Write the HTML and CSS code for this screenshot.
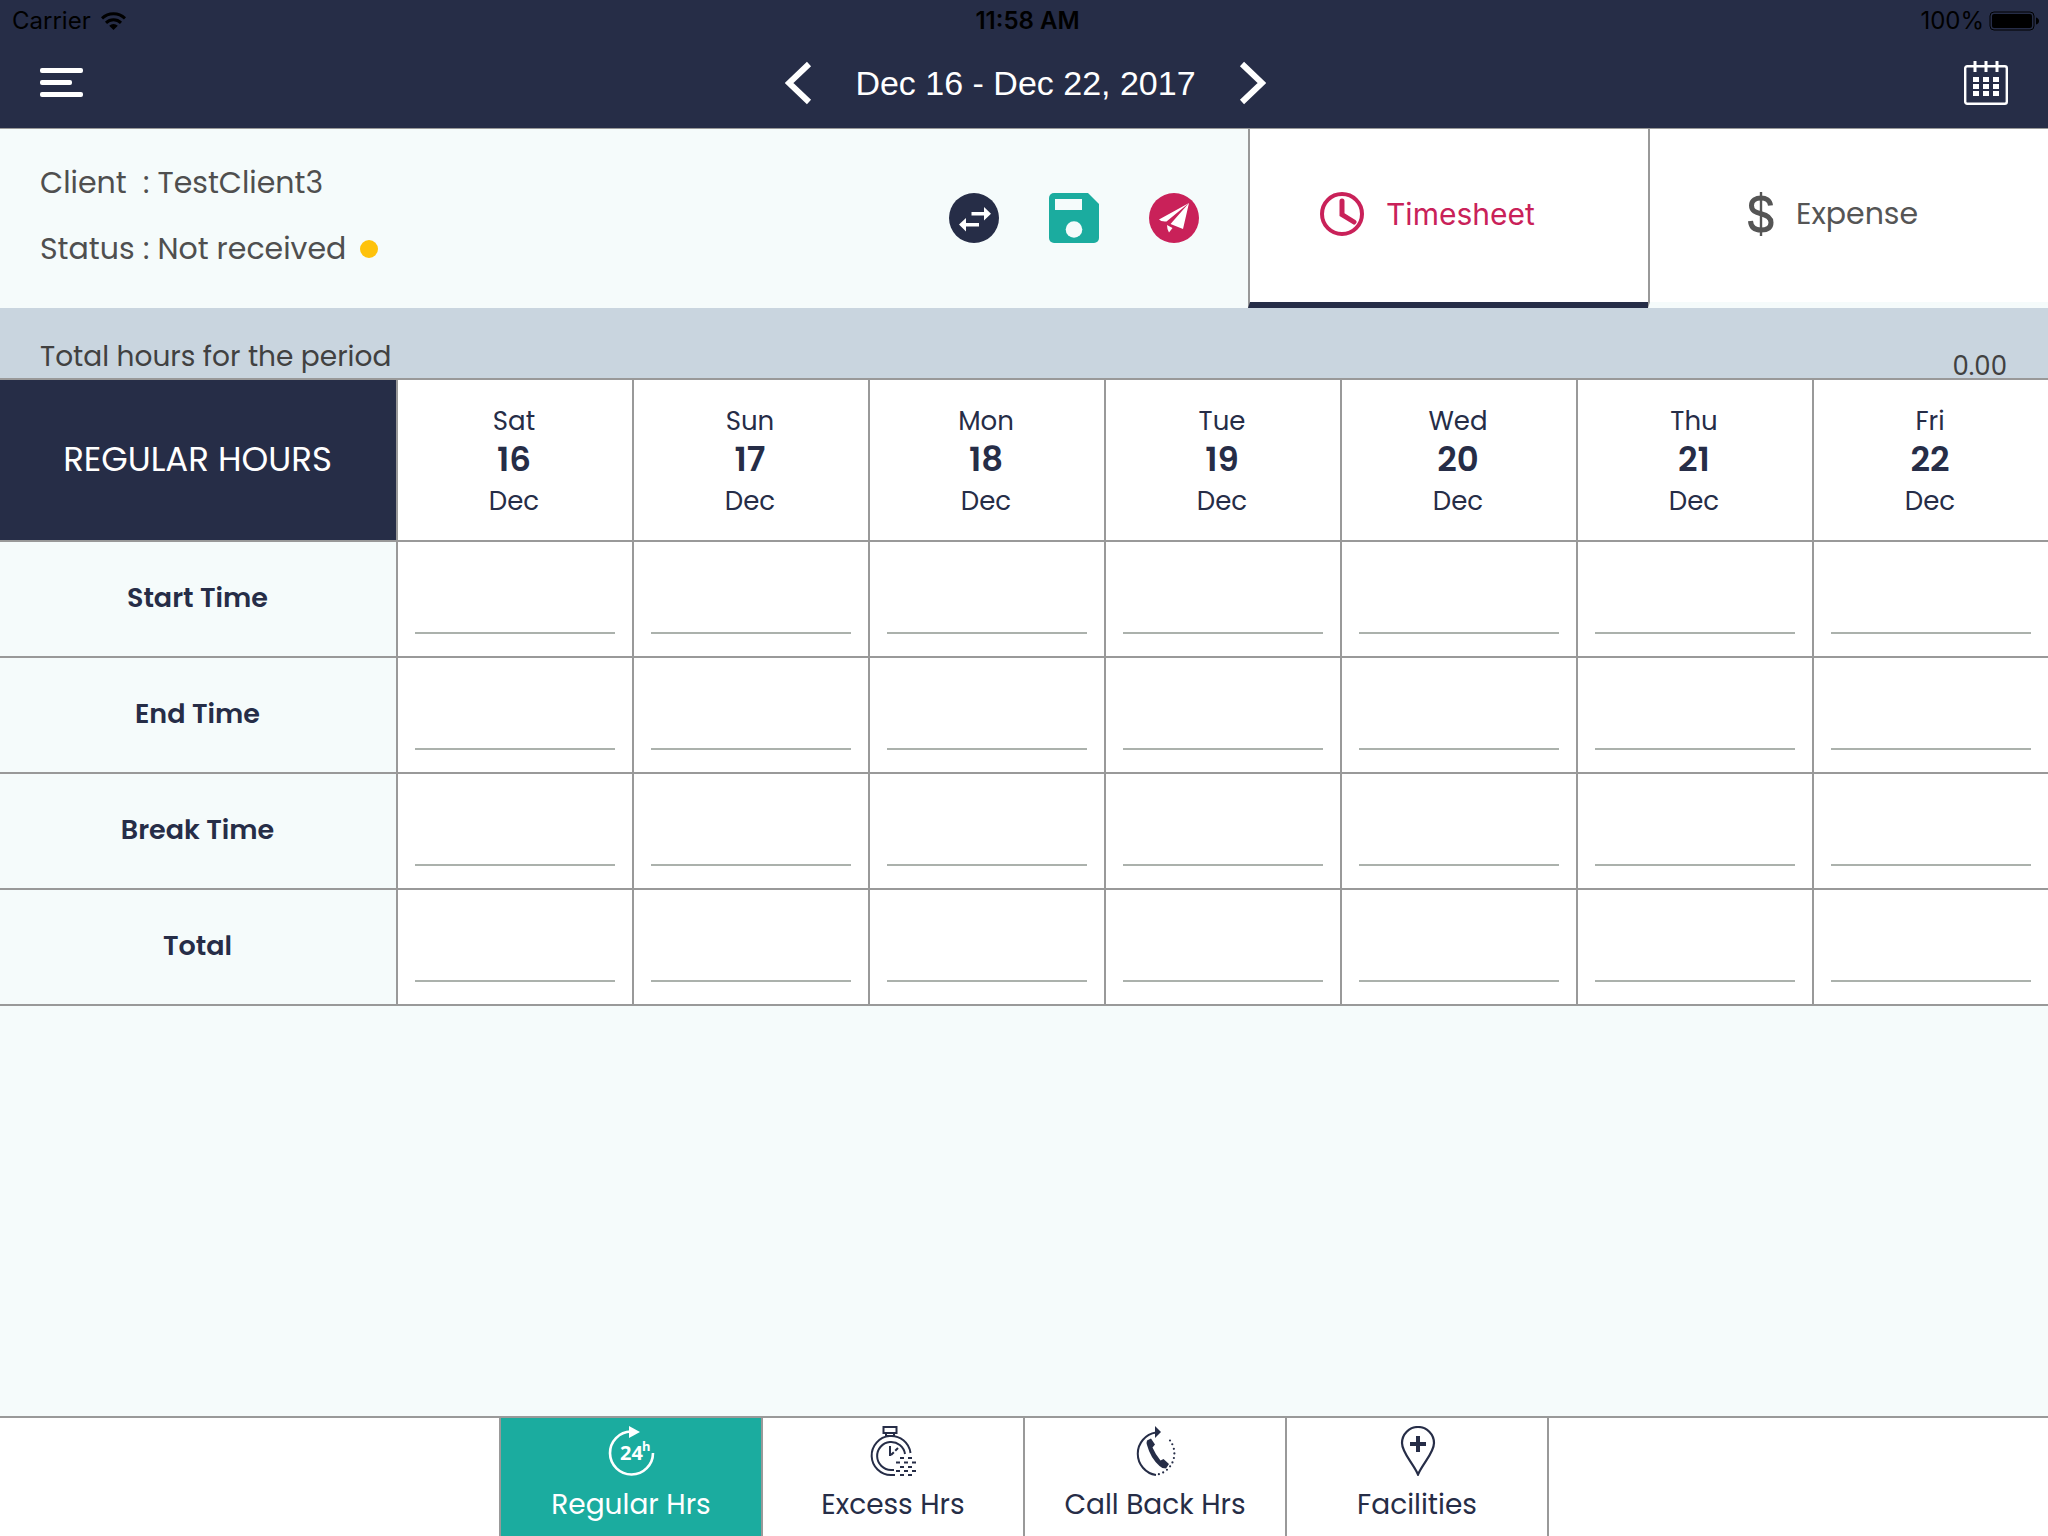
FILE: index.html
```html
<!DOCTYPE html>
<html lang="en">
<head>
<meta charset="utf-8">
<title>Timesheet</title>
<meta name="viewport" content="width=device-width, initial-scale=1">
<link rel="stylesheet" href="styles.css">
</head>
<body>
<header class="top">
  <div class="statusbar">
    <span class="carrier">Carrier
      <svg class="wifi" width="25" height="18" viewBox="0 0 25 18" aria-hidden="true"><g fill="none" stroke="currentColor" stroke-width="3"><path d="M1 6.300a16.500 16.500 0 0 1 23 0"/><path d="M5 10.800a10.800 10.800 0 0 1 15 0"/></g><path d="M12.500 18l-4.300-4.300a6.200 6.200 0 0 1 8.600 0z" fill="currentColor"/></svg>
    </span>
    <span class="clock">11:58 AM</span>
    <span class="battery">100%
      <svg width="50" height="20" viewBox="0 0 50 20" aria-hidden="true"><rect x="1" y="1" width="44" height="18" rx="4" fill="none" stroke="currentColor" stroke-width="1"/><rect x="3" y="3" width="40" height="14" rx="2" fill="currentColor"/><path d="M47 6.500q3 1 3 3.500t-3 3.500z" fill="currentColor"/></svg>
    </span>
  </div>
  <nav class="toolbar">
    <button class="icon-btn" aria-label="Menu"><svg width="43" height="30" viewBox="0 0 43 30"><g fill="#fff"><rect y="0" width="43" height="5" rx="2"/><rect y="12" width="32" height="5" rx="2"/><rect y="24" width="43" height="5" rx="2"/></g></svg></button>
    <div class="period">
      <button class="icon-btn" aria-label="Previous week"><svg width="27" height="44" viewBox="0 0 27 44"><path d="M24 3L4 22l20 19" fill="none" stroke="#fff" stroke-width="6"/></svg></button>
      <span class="period-text">Dec 16 - Dec 22, 2017</span>
      <button class="icon-btn" aria-label="Next week"><svg width="27" height="44" viewBox="0 0 27 44"><path d="M3 3l20 19L3 41" fill="none" stroke="#fff" stroke-width="6"/></svg></button>
    </div>
    <button class="icon-btn" aria-label="Calendar"><svg width="44" height="44" viewBox="0 0 44 44"><rect x="1.200" y="5.200" width="41.600" height="37.600" rx="2" fill="none" stroke="#fff" stroke-width="2.400"/><path d="M11 0v11M22 0v11M33 0v11" stroke="#fff" stroke-width="3"/><g stroke="#fff" stroke-width="5" stroke-dasharray="6 4"><path d="M9 18.500h26M9 25.500h26M9 32.500h26"/></g></svg></button>
  </nav>
</header>

<section class="summary">
  <dl class="info">
    <div><dt>Client</dt><dd>: TestClient3</dd></div>
    <div><dt>Status</dt><dd>: Not received <i class="dot"></i></dd></div>
  </dl>
  <div class="actions">
    <button class="icon-btn" aria-label="Switch"><svg width="50" height="50" viewBox="0 0 50 50"><circle cx="25" cy="25" r="25" fill="#262d47"/><path d="M22.500 19h12.500v-5l7 6.700-7 6.800v-5H22.500zM30 30H17v-5l-7 6.500 7 7V33.500h13z" fill="#fff"/></svg></button>
    <button class="icon-btn" aria-label="Save"><svg width="50" height="50" viewBox="0 0 50 50"><path d="M5 0h34l11 11v34a5 5 0 0 1-5 5H5a5 5 0 0 1-5-5V5a5 5 0 0 1 5-5z" fill="#1bac9f"/><path d="M6 6h27v11H6z" fill="#f5fbfb"/><circle cx="25" cy="36.500" r="8.300" fill="#f5fbfb"/></svg></button>
    <button class="icon-btn" aria-label="Submit"><svg width="50" height="50" viewBox="0 0 50 50"><circle cx="25" cy="25" r="25" fill="#c92159"/><path d="M40 10L10 26.500q2 2.500 7.500 2zM40 10L21.500 31l12.500 5zM18 32l5.500 3L20 39.500q-2-3-2-7.500z" fill="#fff"/></svg></button>
  </div>
  <nav class="tabs">
    <a class="tab tab-on" href="#timesheet"><svg width="44" height="44" viewBox="0 0 44 44" fill="none" stroke="currentColor"><circle cx="22" cy="22" r="20" stroke-width="4"/><path d="M22 9v13.500l12 7.500" stroke-width="5" stroke-linecap="round"/></svg>Timesheet</a>
    <a class="tab tab-off" href="#expense"><svg width="26" height="44" viewBox="0 0 26 44" fill="none" stroke="currentColor"><path d="M22.500 13.500C22 8.500 18 6 13 6S3.500 8.500 3.500 13.500C3.500 19 8 20.500 13 21.700S23 25 23 30.500 18.500 38 13 38 3 35.500 2.500 29" stroke-width="5"/><path d="M13 0v44" stroke-width="2.400"/></svg>Expense</a>
  </nav>
</section>

<main class="content">
  <div class="total"><span class="total-label">Total hours for the period</span><output class="total-value">0.00</output></div>
  <table class="sheet">
    <thead><tr>
      <th class="corner" scope="col">REGULAR HOURS</th>
      <th class="day" scope="col">Sat<b>16</b>Dec</th>
      <th class="day" scope="col">Sun<b>17</b>Dec</th>
      <th class="day" scope="col">Mon<b>18</b>Dec</th>
      <th class="day" scope="col">Tue<b>19</b>Dec</th>
      <th class="day" scope="col">Wed<b>20</b>Dec</th>
      <th class="day" scope="col">Thu<b>21</b>Dec</th>
      <th class="day" scope="col">Fri<b>22</b>Dec</th>
    </tr></thead>
    <tbody>
      <tr><th scope="row">Start Time</th><td><input aria-label="Start Time, Sat 16"></td><td><input aria-label="Start Time, Sun 17"></td><td><input aria-label="Start Time, Mon 18"></td><td><input aria-label="Start Time, Tue 19"></td><td><input aria-label="Start Time, Wed 20"></td><td><input aria-label="Start Time, Thu 21"></td><td><input aria-label="Start Time, Fri 22"></td></tr>
      <tr><th scope="row">End Time</th><td><input aria-label="End Time, Sat 16"></td><td><input aria-label="End Time, Sun 17"></td><td><input aria-label="End Time, Mon 18"></td><td><input aria-label="End Time, Tue 19"></td><td><input aria-label="End Time, Wed 20"></td><td><input aria-label="End Time, Thu 21"></td><td><input aria-label="End Time, Fri 22"></td></tr>
      <tr><th scope="row">Break Time</th><td><input aria-label="Break Time, Sat 16"></td><td><input aria-label="Break Time, Sun 17"></td><td><input aria-label="Break Time, Mon 18"></td><td><input aria-label="Break Time, Tue 19"></td><td><input aria-label="Break Time, Wed 20"></td><td><input aria-label="Break Time, Thu 21"></td><td><input aria-label="Break Time, Fri 22"></td></tr>
      <tr><th scope="row">Total</th><td><input aria-label="Total, Sat 16"></td><td><input aria-label="Total, Sun 17"></td><td><input aria-label="Total, Mon 18"></td><td><input aria-label="Total, Tue 19"></td><td><input aria-label="Total, Wed 20"></td><td><input aria-label="Total, Thu 21"></td><td><input aria-label="Total, Fri 22"></td></tr>
    </tbody>
  </table>
</main>

<nav class="bottom">
  <a class="kind kind-on" href="#regular">
    <svg width="50" height="50" viewBox="0 0 50 50"><path d="M25 5.500A21.500 21.500 0 1 0 47 27" fill="none" stroke="currentColor" stroke-width="2.600"/><path d="M23 0l11 6-11 6z" fill="currentColor"/><text x="14" y="34" class="glyph">24</text><text x="36" y="25" class="glyph-sup">h</text></svg>
    Regular Hrs</a>
  <a class="kind" href="#excess">
    <svg width="50" height="50" viewBox="-2 0 50 50" fill="none" stroke="currentColor" stroke-width="2"><path d="M13.500 1h13v6h-13zM16 7v4M24 7v4M16 10h8"/><path d="M25 49H21a19.500 19.500 0 1 1 19.500-22"/><path d="M24 44h-3a14 14 0 1 1 14-16"/><path d="M20 20v10"/><path d="M21 29l7-7" stroke-dasharray="4 2"/><g stroke-dasharray="4 4"><path d="M30 32h12M26 36.500h20M30 41h12M26 45h20M30 49h12"/></g></svg>
    Excess Hrs</a>
  <a class="kind" href="#callback">
    <svg width="50" height="50" viewBox="-1 0 50 50"><path d="M25 6.500a21.500 21.500 0 0 0 0 42.500" fill="none" stroke="currentColor" stroke-width="2"/><path d="M24 0l6 6-6 6z" fill="currentColor"/><path d="M39 14.500a21.500 21.500 0 0 1-12.500 34" fill="none" stroke="currentColor" stroke-width="2.200" stroke-linecap="round" stroke-dasharray="0 4.600"/><path d="M16 14.500l4-2 4 6-2.500 3q3 7 8 13l3-1.500 5.500 5-3 4.500q-4 0-6.500-2.500-9-8-12.500-21-.8-2.500 0-4.500z" fill="currentColor"/></svg>
    Call Back Hrs</a>
  <a class="kind" href="#facilities">
    <svg width="50" height="50" viewBox="-1 0 50 50" fill="none" stroke="currentColor"><path d="M25 48.500C20 37 9 27 9 17a16 16 0 0 1 32 0c0 10-11 20-16 31.500z" stroke-width="2.200"/><path d="M25 10v16M17 18h16" stroke-width="4"/></svg>
    Facilities</a>
</nav>
</body>
</html>
```
FILE: styles.css
```css
* { box-sizing: border-box; }

body {
  margin: 0;
  min-height: 100vh;
  display: flex;
  flex-direction: column;
  background: #f5fbfb;
  color: #262d47;
  font-family: Poppins, Inter, "Noto Sans", sans-serif;
}

svg { flex: none; display: block; }
a { color: inherit; text-decoration: none; }
.icon-btn { padding: 0; border: 0; background: none; cursor: pointer; }

/* Header */
.top { background: #262d47; border-bottom: 1px solid #999; }
.statusbar {
  display: grid;
  grid-template-columns: 1fr auto 1fr;
  align-items: center;
  height: 40px;
  padding: 2px 9px 0 12px;
  color: #000;
  font: 24px/38px Inter, sans-serif;
}
.carrier, .battery { display: flex; align-items: center; gap: 10px; }
.battery { justify-content: flex-end; gap: 5px; }
.clock { padding-left: 4px; font-weight: 600; }
.toolbar {
  display: grid;
  grid-template-columns: 1fr auto 1fr;
  align-items: center;
  height: 88px;
  padding: 0 40px 2px;
}
.toolbar > :last-child { justify-self: end; }
.toolbar > :first-child { justify-self: start; }
.period { display: flex; align-items: center; gap: 43px; padding-left: 3px; }
.period-text { color: #fff; font: 34px/44px "Liberation Sans", sans-serif; }

/* Client summary and section tabs */
.summary { display: flex; min-height: 179px; }
.info {
  flex: 1;
  margin: 0;
  padding: 21px 40px;
  color: #4f4f4f;
  font-size: 30px;
  line-height: 66px;
}
.info div { display: flex; }
.info dt { width: 103px; }
.info dd { margin: 0; display: flex; align-items: center; gap: 14px; }
.dot { width: 18px; height: 18px; border-radius: 50%; background: #fec20b; }
.actions { display: flex; align-items: center; gap: 50px; padding: 0 49px 2px 0; }
.tabs { display: grid; grid-template-columns: 1fr 1fr; width: 800px; }
.tab {
  display: flex;
  align-items: center;
  gap: 22px;
  padding-bottom: 4px;
  border-left: 2px solid #999;
  border-bottom: 6px solid transparent;
  background: #fff;
  background-clip: padding-box;
  font-size: 30px;
}
.tab-on { padding-left: 70px; color: #c92159; border-bottom-color: #262d47; font-family: Inter, sans-serif; }
.tab-off { padding-left: 98px; color: #555; }

/* Period total */
.content { flex: 1; }
.total {
  display: flex;
  justify-content: space-between;
  height: 70px;
  padding: 20px 41px 0 40px;
  background: #c9d5df;
  color: #414141;
}
.total-label { font-size: 28px; line-height: 58px; }
.total-value { font-size: 26px; line-height: 76px; }

/* Hours table */
.sheet {
  width: 100%;
  border-collapse: separate;
  border-spacing: 0;
  table-layout: fixed;
  border-top: 2px solid #999;
}
.sheet th, .sheet td { padding: 0 1px 2px 0; border-bottom: 2px solid #999; }
.sheet td, .sheet .day { border-left: 2px solid #999; background: #fff; }
.sheet .corner {
  width: 396px;
  background: #262d47;
  color: #fff;
  font-size: 34px;
  font-weight: 400;
}
.sheet .day { height: 162px; padding: 2px 2px 0 0; font-size: 26px; font-weight: 400; line-height: 36px; }
.day b { display: block; margin-bottom: 4px; font-size: 34px; font-weight: 600; line-height: 40px; }
.sheet tbody th { height: 116px; font-size: 27px; font-weight: 600; }
.sheet td { padding: 0 17px 22px; vertical-align: bottom; }
.sheet input {
  display: block;
  width: 100%;
  height: 60px;
  border: 0;
  border-bottom: 2px solid #abb1ac;
  background: none;
  font: inherit;
}

/* Hour type tabs */
.bottom {
  display: flex;
  justify-content: center;
  border-top: 2px solid #999;
  background: #fff;
}
.kind {
  width: 262px;
  height: 118px;
  display: flex;
  flex-direction: column;
  align-items: center;
  gap: 9px;
  padding-top: 8px;
  border-left: 2px solid #999;
  font-size: 28px;
  line-height: 40px;
}
.kind:last-child { width: 264px; border-right: 2px solid #999; }
.kind-on { background: #1bac9f; color: #fff; }
.glyph { fill: currentColor; font: 700 20px "Noto Sans", sans-serif; }
.glyph-sup { fill: currentColor; font: 700 13px "Noto Sans", sans-serif; }
```
